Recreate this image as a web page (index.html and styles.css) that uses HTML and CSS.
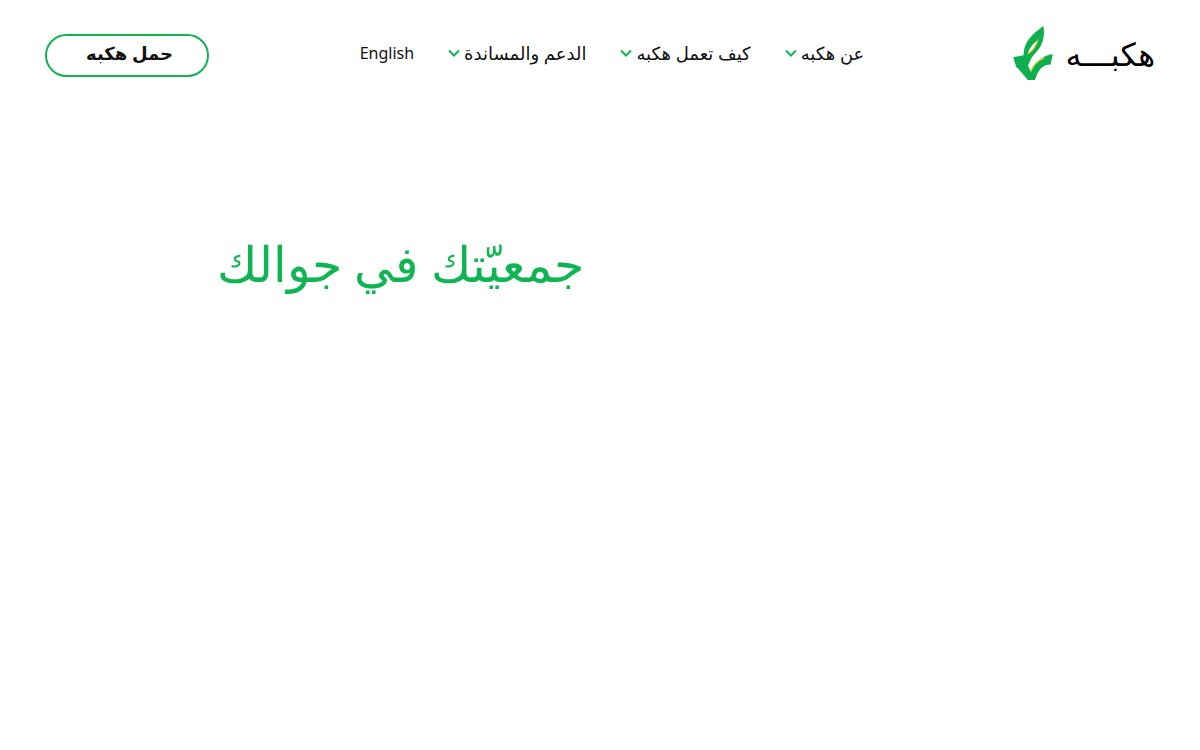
FILE: index.html
```html
<!DOCTYPE html>
<html lang="ar" dir="rtl">

<head>
    <meta charset="UTF-8">
    <title>هكبه</title>
    <link rel="stylesheet" href="styles.css">
</head>

<body>
    <header class="site-header">
        <a class="logo" href="#">
            <span class="logo-text">هكبـــه</span>
            <svg class="logo-mark" viewBox="8 4 38 52" width="40" height="54" aria-hidden="true">
                <path d="M37 4 C39 14 36 25 27 32 L18 34 C17 20 26 12 37 4 Z" fill="#0fae4f"/>
                <path d="M31 18 C27 21 24 25 22 30 C27 28 30 23 31 18 Z" fill="#ffffff"/>
                <path d="M32 17 C30 23 27 28 22 31" fill="none" stroke="#e9d21f" stroke-width="1"/>
                <path d="M8 34 L29 30 C25 35 23 39 22 44 L11 44 Z" fill="#0fae4f"/>
                <path d="M11 43 L22 42 L29 56 L22 56 Z" fill="#0fae4f"/>
                <path d="M46 31 L44 41 C37 41 32 45 29 56 L22 56 C24 44 33 33 46 31 Z" fill="#0fae4f"/>
                <path d="M38 35 C32 37 27 42 25 48" fill="none" stroke="#e9d21f" stroke-width="1"/>
            </svg>
        </a>
        <nav class="main-nav">
            <a class="nav-item" href="#">عن هكبه
                <svg class="chevron" viewBox="0 0 12 8" width="12" height="8" aria-hidden="true"><path d="M1 1.5 L6 6.5 L11 1.5" /></svg>
            </a>
            <a class="nav-item" href="#">كيف تعمل هكبه
                <svg class="chevron" viewBox="0 0 12 8" width="12" height="8" aria-hidden="true"><path d="M1 1.5 L6 6.5 L11 1.5" /></svg>
            </a>
            <a class="nav-item" href="#">الدعم والمساندة
                <svg class="chevron" viewBox="0 0 12 8" width="12" height="8" aria-hidden="true"><path d="M1 1.5 L6 6.5 L11 1.5" /></svg>
            </a>
            <a class="nav-item nav-lang" href="#">English</a>
        </nav>
        <a class="download-btn" href="#">حمل هكبه</a>
    </header>

    <main class="hero">
        <h1 class="hero-title">جمعيّتك في جوالك</h1>
    </main>
</body>

</html>
```

FILE: styles.css
```css
body {
    font-family: 'Noto Sans', 'DejaVu Sans', sans-serif;
    background-color: white;
    margin: 0;
    padding: 0;
    color: #111;
}

a {
    color: inherit;
    text-decoration: none;
}

.site-header {
    display: flex;
    justify-content: space-between;
    align-items: center;
    padding: 27px 45px 17px;
    height: 52px;
}

.logo {
    display: flex;
    align-items: center;
    gap: 13px;
    width: 143px;
}

.logo-text {
    font-size: 32px;
    font-weight: 500;
    color: black;
}

.main-nav {
    display: flex;
    align-items: center;
    gap: 34px;
    margin-left: 3px;
    font-size: 18px;
}

.nav-item {
    display: flex;
    align-items: center;
    gap: 4px;
}

.nav-lang {
    font-size: 16px;
}

.chevron {
    fill: none;
    stroke: #0fb552;
    stroke-width: 2;
}

.download-btn {
    box-sizing: border-box;
    width: 164px;
    height: 43px;
    margin-top: 5px;
    padding: 0 0 6px 5px;
    border: 2px solid #0fb552;
    border-radius: 22px;
    display: flex;
    justify-content: center;
    align-items: center;
    font-size: 18px;
    font-weight: 700;
}

.hero {
    padding: 132px 0 0 220px;
    direction: ltr;
}

.hero-title {
    margin: 0;
    width: 364px;
    text-align: right;
    direction: rtl;
    white-space: nowrap;
    color: #0fb552;
    font-size: 49px;
    font-weight: 300;
    line-height: 70px;
}
```
